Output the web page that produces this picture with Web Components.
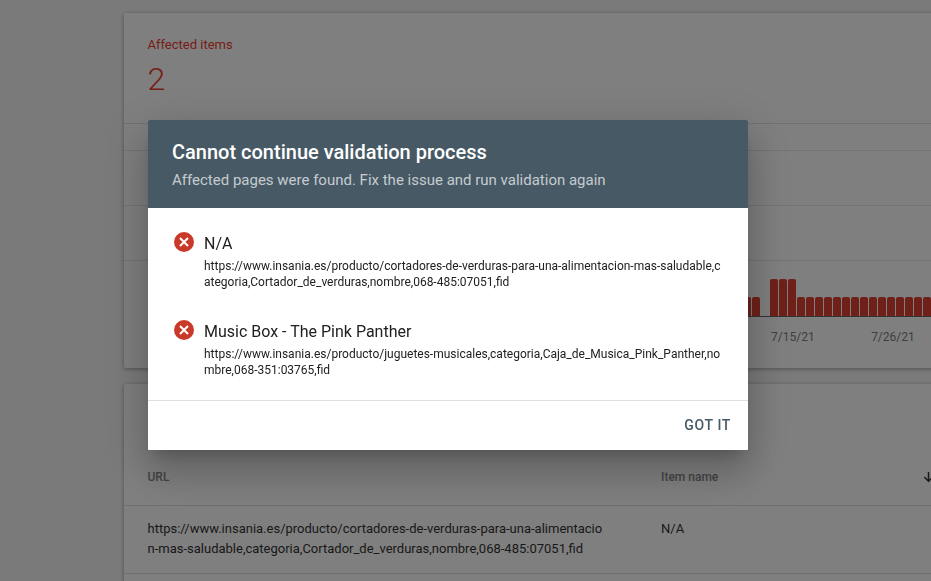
<!DOCTYPE html>
<html><head><meta charset="utf-8">
<style>
html,body{margin:0;height:581px;overflow:hidden;background:#f5f5f5;font-family:Roboto,"Liberation Sans",sans-serif}
</style></head><body>
<template id="t-page"><style>
:host{display:block;width:931px;height:581px;overflow:hidden;position:relative;padding:13px 0 0 124px;box-sizing:border-box}
.stack{display:flex;flex-direction:column;gap:16px;width:900px}
</style><div class="stack"><slot></slot></div></template>

<template id="t-card"><style>
:host{display:block;background:#fff;border-radius:2px;box-shadow:0 1px 4px rgba(0,0,0,.35)}
</style><slot></slot></template>

<template id="t-summary"><style>
:host{display:block;height:111px;box-sizing:border-box;padding:24px 23.5px 0;border-bottom:1px solid #e0e0e0}
.l{font-size:13px;line-height:16px;color:#ee3d2f}
.v{font-size:32px;line-height:40px;font-weight:300;color:#ee3d2f;margin-top:6px}
</style><div class="l">Affected items</div><div class="v">2</div></template>

<template id="t-chart"><style>
:host{display:block;height:244px;position:relative;box-sizing:border-box;padding-top:26px}
.plot{height:166px;display:grid;grid-template-rows:repeat(3,55px) 1px;}
.g{border-top:1px solid #e8e8e8}
.bars{position:absolute;left:619px;top:155px;height:37px;width:300px;display:flex;align-items:flex-end;gap:1px;border-bottom:1px solid #666}
.b{width:8px;height:19px;background:#de4232;border-radius:2px 2px 0 0;flex:none}
.b.t{height:37px}.b.n{background:none}
.axis{position:absolute;left:647px;top:205px;display:flex;gap:56.5px;font-size:12px;line-height:16px;color:#808080}
</style><div class="plot"><div class="g"></div><div class="g"></div><div class="g"></div></div>
<div class="bars" id="bars"></div>
<div class="axis"><span>7/15/21</span><span>7/26/21</span></div></template>

<template id="t-table"><style>
:host{display:block;padding-top:69px}
.row{display:grid;grid-template-columns:513.5px 1fr;padding-left:23.5px;border-bottom:1px solid #e0e0e0;font-size:13px;color:#333}
.h{height:53px;box-sizing:border-box;padding-top:16px;line-height:16px;font-size:12px;font-weight:500;color:#888;position:relative}
.d{height:68px;box-sizing:border-box;padding-top:13px;line-height:20px}
.url{width:455px;word-break:break-all}
.arrow{position:absolute;left:796px;top:16px}
</style>
<div class="row h"><span>URL</span><span>Item name</span>
<svg class="arrow" width="16" height="16" viewBox="0 0 16 16"><path d="M8.5 3v9M4.3 8l4.2 4.2L12.700 8" fill="none" stroke="#333" stroke-width="1.5"/></svg></div>
<div class="row d"><span class="url">https://www.insania.es/producto/cortadores-de-verduras-para-una-alimentacion-mas-saludable,categoria,Cortador_de_verduras,nombre,068-485:07051,fid</span><span>N/A</span></div>
<div class="row d"></div></template>

<template id="t-overlay"><style>
:host{position:fixed;inset:0;background:rgba(0,0,0,.5);display:flex;align-items:flex-start;padding:120px 0 0 148px;box-sizing:border-box}
</style><slot></slot></template>

<template id="t-dialog"><style>
:host{display:block;width:600px;background:#fff;box-shadow:0 11px 15px -7px rgba(0,0,0,.2),0 24px 38px 3px rgba(0,0,0,.14),0 9px 46px 8px rgba(0,0,0,.12);border-radius:1px}
header{background:#465965;height:88px;box-sizing:border-box;padding:20px 24px 0;border-radius:1px 1px 0 0}
h2{margin:0;font-size:20px;line-height:24px;font-weight:500;color:#fff}
p{margin:6px 0 0;font-size:15px;line-height:20px;color:rgba(255,255,255,.7)}
.body{padding:24px 24px 0;height:193px;box-sizing:border-box;border-bottom:1px solid #e0e0e0;display:flex;flex-direction:column;gap:30px}
footer{height:49px;box-sizing:border-box;padding:0 17px 1px 0;display:flex;align-items:center;justify-content:flex-end}
button{all:unset;font-size:14px;font-weight:500;letter-spacing:.65px;color:#465965}
</style><header><h2>Cannot continue validation process</h2><p>Affected pages were found. Fix the issue and run validation again</p></header>
<div class="body"><slot></slot></div><footer><button>GOT IT</button></footer></template>

<template id="t-item"><style>
:host{display:grid;grid-template-columns:20px 1fr;column-gap:10px;padding-left:2px}
svg{display:block}
.n{font-size:16px;line-height:22px;color:#212121;margin-top:1px}
.u{font-size:12px;line-height:16px;color:#212121;word-break:break-all;margin-top:3px;grid-column:2;width:520px}
</style><svg width="20" height="20" viewBox="0 0 20 20"><circle cx="10" cy="10" r="10" fill="#c9392a"/><path d="M6 6l8 8M14 6l-8 8" stroke="#fff" stroke-width="2"/></svg>
<div class="n"><slot name="name"></slot></div><div class="u"><slot name="url"></slot></div></template>

<x-page>
  <x-card><x-summary></x-summary><x-chart></x-chart></x-card>
  <x-card><x-table></x-table></x-card>
</x-page>
<x-overlay><x-dialog>
  <x-item><span slot="name">N/A</span><span slot="url">https://www.insania.es/producto/cortadores-de-verduras-para-una-alimentacion-mas-saludable,categoria,Cortador_de_verduras,nombre,068-485:07051,fid</span></x-item>
  <x-item><span slot="name">Music Box - The Pink Panther</span><span slot="url">https://www.insania.es/producto/juguetes-musicales,categoria,Caja_de_Musica_Pink_Panther,nombre,068-351:03765,fid</span></x-item>
</x-dialog></x-overlay>
<script>
for(const n of ['page','card','summary','chart','table','overlay','dialog','item']){
  customElements.define('x-'+n,class extends HTMLElement{
    constructor(){super();const r=this.attachShadow({mode:'open'});
      r.appendChild(document.getElementById('t-'+n).content.cloneNode(true));
      if(n==='chart'){const b=r.getElementById('bars');
        const kinds=['s','s','n','t','t','t'].concat(Array(16).fill('s'));
        for(const k of kinds){const d=document.createElement('div');d.className='b '+(k==='t'?'t':k==='n'?'n':'');b.appendChild(d);}
      }
    }
  });
}
</script>
</body></html>
